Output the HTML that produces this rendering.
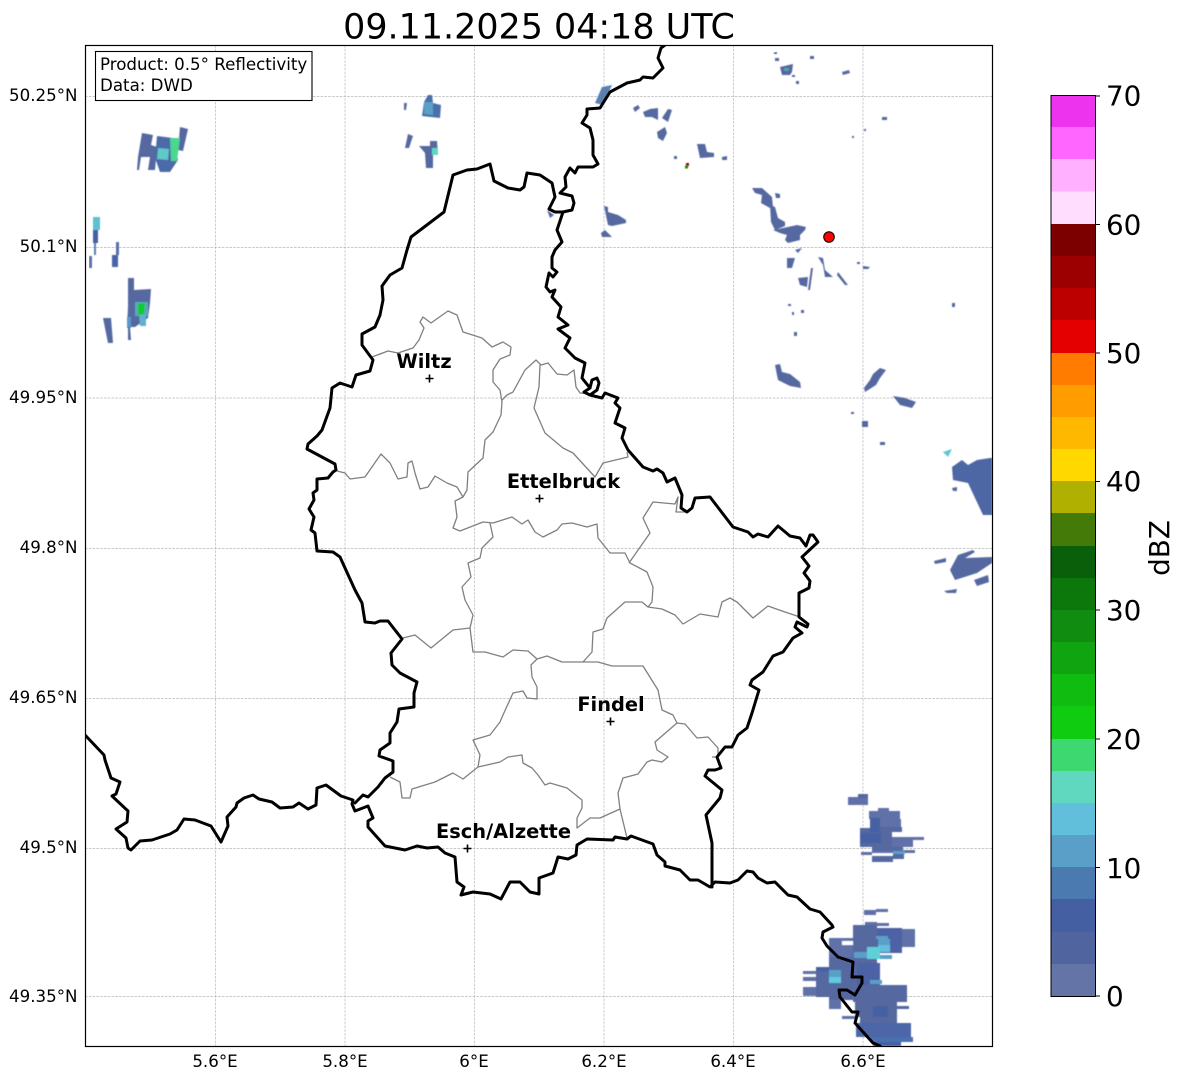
<!DOCTYPE html>
<html><head><meta charset="utf-8"><style>
html,body{margin:0;padding:0;background:#fff}
svg{display:block}
text{font-family:"DejaVu Sans","Liberation Sans",sans-serif;fill:#000}
.t{font-size:16.67px}
.c{font-size:27.8px}
.b{font-size:19.4px;font-weight:bold;text-anchor:middle}
.r{text-anchor:end}
.m{text-anchor:middle}
.k polyline{fill:none;stroke:#000;stroke-width:3;stroke-linejoin:round;stroke-linecap:round}
.g polyline{fill:none;stroke:#808080;stroke-width:1.3;stroke-linejoin:round}
</style></head><body>
<svg width="1184" height="1081" viewBox="0 0 1184 1081" xmlns="http://www.w3.org/2000/svg">
<rect width="1184" height="1081" fill="#fff"/>
<text x="539" y="38.500" font-size="34.9" class="m">09.11.2025 04:18 UTC</text>
<defs><clipPath id="p"><rect x="85" y="45" width="907" height="1001"/></clipPath>
<filter id="bl" x="0" y="0" width="1" height="1"><feGaussianBlur stdDeviation=".45"/></filter></defs>
<g clip-path="url(#p)">
<g stroke="#b8b8b8" stroke-width=".7" stroke-dasharray="2.6 1.2">
<path d="M215.500 45V1046M345 45V1046M474.500 45V1046M604 45V1046M733.500 45V1046M863 45V1046"/>
<path d="M85 96.500H992M85 247.500H992M85 398H992M85 548.500H992M85 698.500H992M85 848.500H992M85 996.500H992"/>
</g>
<g fill="#5468a0" filter="url(#bl)">
<polygon points="142,133 153,135 151,145 157,147 155,170 148,170 150,157 138,157 140,145"/>
<polygon points="138,157 141,157 139,170 137,170"/>
<polygon points="157,136 173,138 178,160 170,172 160,172 155,158" fill="#4e6aa8"/>
<polygon points="180,127 188,129 183,151 178,150"/>
<polygon points="158,148 169,149 168,160 157,159" fill="#5ec8c8"/>
<polygon points="170,138 180,138 177,161 171,161" fill="#48d890"/>
<rect x="93" y="217" width="7" height="13" fill="#5ec0d0"/>
<rect x="93" y="230" width="5" height="13" fill="#4a60a0"/>
<rect x="94" y="243" width="2" height="12" fill="#5a80b0"/>
<rect x="89" y="256" width="3" height="12" fill="#5a70a8"/>
<rect x="112" y="255" width="6" height="12" fill="#4a62a8"/>
<rect x="116" y="242" width="3" height="13" fill="#5a70a8"/>
<polygon points="128,278 134,278 134,290 151,289 150,303 148,318 135,327 127,327 128,307"/>
<rect x="135" y="302" width="13" height="14" fill="#5aa8b8"/>
<polygon points="138,303 145,303 144,314 138,315" fill="#10cc30"/>
<polygon points="139,315 146,315 146,326 140,326" fill="#62b0d0"/>
<polygon points="127,317 131,317 131,328 127,328" fill="#5a98c8"/>
<polygon points="128,327 130,327 131,340 128,340"/>
<polygon points="103,318 111,318 113,343 108,343"/>
<polygon points="404,103 407,103 406,110 404,110"/>
<polygon points="428,95 432,95 433,103 441,105 440,118 422,116 424,102" fill="#4a70a8"/>
<polygon points="424,102 433,102 433,115 424,114" fill="#5a9fc8"/>
<polygon points="408,134 413,136 409,148 405,148"/>
<polygon points="419,146 430,146 430,141 437,141 438,155 433,155 433,168 426,168 425,153"/>
<polygon points="432,148 438,148 438,155 432,155" fill="#60d8c0"/>
<polygon points="595,103 602,87 612,85 603,105" fill="#5a80b0"/>
<polygon points="633,108 638,105 640,108 635,112"/>
<polygon points="643,112 650,109 658,108 658,120 652,117 645,117"/>
<polygon points="662,118 668,109 672,110 668,122"/>
<polygon points="657,132 665,127 667,133 663,141 658,138"/>
<rect x="674" y="156" width="3" height="3"/>
<rect x="686" y="163" width="3" height="3" fill="#9c0000"/>
<rect x="685" y="165.500" width="3" height="3" fill="#108c10"/>
<polygon points="697,144 705,144 707,152 714,153 714,157 700,158"/>
<polygon points="722,157 727,156 727,160 722,160"/>
<polygon points="752,188 762,188 772,197 773,207 770,208 761,203 762,195 755,193"/>
<polygon points="770,205 775,207 778,218 785,222 785,226 775,230 771,222"/>
<polygon points="773,230 788,227 797,225 806,227 805,230 800,235 800,240 788,243 785,240 787,235 780,233"/>
<polygon points="775,193 780,194 780,198 776,198"/>
<polygon points="795,250 802,248 798,253"/>
<polygon points="787,258 795,258 792,268 787,268"/>
<polygon points="798,278 808,277 807,287 800,285"/>
<polygon points="811,268 813,268 810,290 808,290"/>
<polygon points="818,257 823,258 825,270 833,277 825,277 823,265"/>
<polygon points="838,272 848,285 845,285 837,275"/>
<polygon points="863,266 870,267 868,269 863,269"/>
<rect x="857" y="262" width="3" height="2"/>
<rect x="882" y="117" width="5" height="3"/>
<rect x="774" y="52" width="3" height="2"/>
<rect x="775" y="58" width="4" height="3"/>
<polygon points="780,67 793,64 792,72 790,75 782,75"/>
<rect x="784" y="68" width="5" height="3" fill="#5a9fa8"/>
<rect x="792" y="75" width="3" height="2"/>
<rect x="796" y="81" width="3" height="3"/>
<rect x="810" y="56" width="4" height="3"/>
<polygon points="842,72 849,70 850,73 843,75"/>
<rect x="852" y="136" width="2" height="2"/>
<rect x="864" y="129" width="2" height="2"/>
<rect x="952" y="303" width="3" height="4"/>
<rect x="788" y="304" width="3" height="2"/>
<rect x="792" y="312" width="2" height="3"/>
<rect x="801" y="310" width="3" height="3"/>
<rect x="794" y="332" width="3" height="4"/>
<polygon points="604,206 608,207 608,212 618,215 626,220 626,223 612,226 608,225"/>
<polygon points="601,233 605,230 612,237 602,237"/>
<polygon points="547,210 554,215 550,218"/>
<polygon points="775,365 780,364 782,372 790,374 800,382 801,388 790,386 778,380"/>
<polygon points="880,368 886,370 880,378 876,385 865,392 864,388 870,380 873,374"/>
<polygon points="893,396 905,398 916,402 912,408 900,405"/>
<rect x="851" y="412" width="3" height="2"/>
<rect x="862" y="421" width="6" height="6"/>
<rect x="880" y="442" width="5" height="3"/>
<polygon points="943,452 952,449 948,457" fill="#5ec8d0"/>
<polygon points="952,467 962,460 968,465 977,460 990,458 992,458 992,515 983,515 968,483 953,480" fill="#4e66a4"/>
<polygon points="952,488 957,487 957,491 953,491"/>
<polygon points="950,570 958,555 973,550 975,552 965,558 992,557 992,563 977,573 955,580"/>
<polygon points="934,561 946,558 946,562 935,564"/>
<polygon points="974,580 988,575 989,582 977,586"/>
<polygon points="944,591 957,589 956,593 947,593"/>
<rect x="848" y="797" width="20" height="8" fill="#6070a8"/>
<rect x="858" y="794" width="10" height="4"/>
<rect x="878" y="808" width="11" height="3" fill="#6070a8"/>
<rect x="869" y="811" width="31" height="8" fill="#6070a8"/>
<rect x="870" y="819" width="31" height="8" fill="#6070a8"/>
<rect x="870" y="827" width="32" height="5"/>
<rect x="860" y="828" width="32" height="19"/>
<rect x="870" y="818" width="10" height="14" fill="#4460a3"/>
<rect x="860" y="833" width="21" height="10" fill="#4460a3"/>
<rect x="892" y="837" width="21" height="10" fill="#6070a8"/>
<rect x="913" y="837" width="11" height="3" fill="#6070a8"/>
<rect x="861" y="852" width="11" height="3" fill="#6070a8"/>
<rect x="872" y="850" width="43" height="3" fill="#6070a8"/>
<rect x="893" y="851" width="12" height="3" fill="#5a9fc8"/>
<rect x="872" y="856" width="21" height="6"/>
<rect x="893" y="854" width="11" height="5"/>
<rect x="872" y="847" width="31" height="4"/>
<rect x="864" y="910" width="12" height="5" fill="#6070a8"/>
<rect x="876" y="909" width="12" height="3" fill="#6070a8"/>
<rect x="865" y="922" width="12" height="5" fill="#6070a8"/>
<rect x="877" y="923" width="12" height="3" fill="#6070a8"/>
<rect x="853" y="925" width="24" height="19"/>
<rect x="877" y="928" width="25" height="25" fill="#4e62a4"/>
<rect x="902" y="929" width="13" height="18" fill="#6070a8"/>
<rect x="829" y="938" width="24" height="7" fill="#6070a8"/>
<rect x="842" y="941" width="11" height="4" fill="#fff"/>
<rect x="829" y="945" width="26" height="12" fill="#6070a8"/>
<rect x="853" y="944" width="24" height="20" fill="#5468a0"/>
<rect x="816" y="967" width="37" height="30"/>
<rect x="803" y="971" width="13" height="3" fill="#6070a8"/>
<rect x="803" y="977" width="13" height="4" fill="#6070a8"/>
<rect x="803" y="987" width="13" height="9" fill="#6070a8"/>
<rect x="829" y="957" width="28" height="43"/>
<rect x="829" y="1000" width="12" height="9" fill="#6070a8"/>
<rect x="842" y="1016" width="15" height="3" fill="#6070a8"/>
<rect x="857" y="963" width="23" height="27" fill="#4e62a4"/>
<rect x="853" y="985" width="54" height="17" fill="#5468a0"/>
<rect x="897" y="1006" width="12" height="3"/>
<rect x="855" y="1000" width="42" height="17"/>
<rect x="873" y="1006" width="15" height="11" fill="#4460a3"/>
<rect x="860" y="1017" width="37" height="6"/>
<rect x="856" y="1023" width="55" height="14" fill="#4e66a8"/>
<rect x="870" y="1037" width="43" height="5" fill="#4a70b0"/>
<rect x="873" y="1042" width="28" height="4" fill="#4460a3"/>
<rect x="876" y="936" width="12" height="3" fill="#5a9fc8"/>
<rect x="878" y="939" width="12" height="7" fill="#5a9fc8"/>
<rect x="878" y="945" width="12" height="7" fill="#62bfdb"/>
<rect x="854" y="952" width="13" height="6" fill="#5a9fc8"/>
<rect x="867" y="947" width="13" height="12" fill="#60d0d8"/>
<rect x="880" y="955" width="12" height="4" fill="#5a9fc8"/>
<rect x="829" y="970" width="12" height="7" fill="#5a9fc8"/>
<rect x="829" y="977" width="12" height="6" fill="#62c8e0"/>
<rect x="816" y="967" width="13" height="4" fill="#4460a3"/>
<rect x="870" y="980" width="12" height="4" fill="#5a9fc8"/>
</g>
<g class="g">
<polyline points="372,357 388,351 398,353 413,348 419,340 424,328 420,322 423,317 431,323 448,311 457,315 463,332 482,338 492,347 503,342 511,347 510,355 500,359 493,370 493,382 500,390 502,402 501,415 493,432 485,440 483,458 468,472 467,490 463,497"/>
<polyline points="337,471 345,473 350,479 365,477 381,454 390,463 398,479 407,477 408,463 412,461 415,473 420,489 428,487 435,476 447,483 457,487 463,497 455,501 457,517 453,528 460,531 483,522 493,523 512,517 522,524 528,520 535,532 543,537 557,530 562,524 572,523 587,527 597,524 598,538 610,553 625,553 630,563 647,572 653,587 652,602 648,607"/>
<polyline points="502,400 507,395 513,392 525,370 536,360 541,365 548,363 557,374 567,375 574,370 576,387 580,393 590,394"/>
<polyline points="540,365 539,387 534,408 545,433 563,448 573,453 595,477 603,463 628,457 627,452"/>
<polyline points="490,523 493,537 482,548 480,558 468,563 471,577 462,587 465,600 473,615 470,628 453,630 431,648 415,635 403,638"/>
<polyline points="470,628 473,652 485,652 503,657 513,650 528,651 537,659 547,656 562,662 583,662 598,662 612,666 643,666 658,690 662,710 673,715 677,723 685,724 697,738 708,737 718,748 718,757 712,757"/>
<polyline points="537,659 531,665 532,677 537,687 537,699 527,698 523,691 513,693 503,715 500,722 490,735 473,740 480,755 478,767 463,779 453,773 443,778 435,782 412,789 410,798 402,798 400,782 390,777"/>
<polyline points="478,767 500,762 508,757 522,755 523,763 532,768 538,775 545,785 550,783 567,788 582,800 582,808 577,818 577,828 590,818 600,818 620,809 627,838"/>
<polyline points="620,809 618,793 623,778 638,774 647,762 652,760 662,762 668,757 657,750 655,742 677,723"/>
<polyline points="583,662 592,652 593,632 603,629 607,618 625,602 642,602 648,607 662,609 675,615 683,624 700,614 718,617 722,602 730,598 737,602 753,618 768,606 782,611 800,617"/>
<polyline points="629,563 650,533 643,518 653,502 675,504 678,497 676,512 687,512"/>
</g>
<g class="k">
<polyline points="85,735 104,755 105,760 111,778 120,782 116,794 112,796 128,811 127,822 116,829 126,838 128,848 131,850 140,841 152,840 170,834 177,830 184,819 195,820 211,826 221,842 228,826 227,817 236,807 237,803 244,798 253,795 259,799 272,802 280,808 293,807 299,803 308,809 316,805 317,788 326,785 341,796 353,800 352,804 355,811 368,806 373,818 368,821 368,827 385,846 405,850 417,846 427,848 438,847 445,853 455,857 457,882 464,887 461,895 473,892 490,894 501,899 510,882 520,882 530,892 539,894 539,878 553,873 558,857 568,859 576,855 577,845 587,839 613,840 615,837 627,839 631,836 653,844 657,855 665,862 665,866 680,870 690,880 698,880 710,887 715,882 730,883 738,880 747,871 753,872 758,878 767,883 775,882 788,895 797,897 810,909 820,912 832,925 833,927 823,932 822,938 827,946 838,957 853,962 852,977 862,977 862,983 855,995 847,990 839,990 840,997 852,1012 858,1012 855,1023 873,1043 880,1046"/>
<polyline points="355,803 363,795 368,797 378,787 385,778 393,772 393,761 379,756 380,750 390,743 390,733 397,722 399,709 414,707 414,693 417,682 400,673 392,665 391,653 402,639 388,621 380,621 375,623 365,622 362,603 355,590 340,557 333,552 317,551 315,533 311,530 314,517 309,509 314,500 313,493 317,490 317,479 328,478 333,472 336,470 335,464 307,449 308,444 317,436 322,430 330,408 332,388 340,383 352,387 356,375 370,371 373,360 362,345 362,334 375,327 380,315 383,300 382,286 390,275 402,268 407,250 411,237 444,212 453,175 467,170 477,169 490,164 494,181 508,188 520,190 524,187 527,173 540,175 552,183 555,197 549,209 555,212 563,212 572,210 574,203 572,196 560,193 566,187 565,177 570,168 575,173 578,167 593,167 598,164 593,155 593,140 590,128 582,123 587,115 587,109 600,108 610,92 627,83 640,80 643,77 653,78 663,68 658,58 661,48 665,45"/>
<polyline points="563,212 557,230 562,242 555,250 552,257 552,268 557,272 553,277 549,273 546,287 550,292 555,290 552,297 561,307 558,317 568,325 558,329 570,338 565,348 575,358 585,363 582,378 590,388 592,380 597,378 599,383 597,390 590,395 584,392 590,388"/>
<polyline points="590,395 602,398 605,393 618,398 615,403 620,408 615,423 625,428 622,438 628,450 643,467 653,471 657,469 663,473 667,482 675,478 682,495 681,508 687,512 692,508 695,498 710,497 733,527 748,532 753,537 758,534 768,537 778,526 790,536 800,538 806,546 810,535 813,535 818,542 802,557 809,566 804,573 810,581 809,588 799,593 799,617 808,624 807,627 797,622 795,627 802,633 793,638 783,652 773,656 763,672 752,680 750,685 759,690 752,713 747,728 738,735 732,747 725,747 717,757 721,768 715,770 708,770 705,776 722,790 720,798 706,815 712,843 712,887"/>
</g>
<g fill="none" stroke="#000" stroke-width="1.6">
<path d="M425.500 378.500h8M429.500 374.500v8M535.500 498.500h8M539.500 494.500v8M606.500 721.500h8M610.500 717.500v8M463.500 848.500h8M467.500 844.500v8"/>
</g>
<text class="b" x="424" y="368">Wiltz</text>
<text class="b" x="563.500" y="488">Ettelbruck</text>
<text class="b" x="611" y="711">Findel</text>
<text class="b" x="503.500" y="838">Esch/Alzette</text>
<circle cx="829" cy="237" r="5.300" fill="#f00" stroke="#000" stroke-width="1"/>
<rect x="95.500" y="51.500" width="216.500" height="49" fill="#fff" stroke="#000" stroke-width="1.1"/>
<text class="t" x="100" y="70">Product: 0.5° Reflectivity</text>
<text class="t" x="100" y="91">Data: DWD</text>
</g>
<rect x="85.500" y="45.500" width="907" height="1001" fill="none" stroke="#000" stroke-width="1.2"/>
<g class="t">
<text class="m t" x="215" y="1067">5.6°E</text>
<text class="m t" x="345" y="1067">5.8°E</text>
<text class="m t" x="474" y="1067">6°E</text>
<text class="m t" x="604" y="1067">6.2°E</text>
<text class="m t" x="733" y="1067">6.4°E</text>
<text class="m t" x="863" y="1067">6.6°E</text>
<text class="r t" x="77.500" y="101">50.25°N</text>
<text class="r t" x="77.500" y="252">50.1°N</text>
<text class="r t" x="77.500" y="403">49.95°N</text>
<text class="r t" x="77.500" y="553">49.8°N</text>
<text class="r t" x="77.500" y="703">49.65°N</text>
<text class="r t" x="77.500" y="853">49.5°N</text>
<text class="r t" x="77.500" y="1002">49.35°N</text>
</g>
<g>
<rect x="1051" y="96" width="44" height="32.200" fill="#ee33ee"/>
<rect x="1051" y="127" width="44" height="33" fill="#ff66ff"/>
<rect x="1051" y="159" width="44" height="33" fill="#ffb0ff"/>
<rect x="1051" y="191.500" width="44" height="33" fill="#ffddff"/>
<rect x="1051" y="224" width="44" height="33" fill="#7c0000"/>
<rect x="1051" y="256" width="44" height="33" fill="#9c0000"/>
<rect x="1051" y="288" width="44" height="33" fill="#bc0000"/>
<rect x="1051" y="320" width="44" height="33" fill="#e40000"/>
<rect x="1051" y="353" width="44" height="33" fill="#ff7c00"/>
<rect x="1051" y="385" width="44" height="33" fill="#ff9c00"/>
<rect x="1051" y="417" width="44" height="33" fill="#ffb800"/>
<rect x="1051" y="449" width="44" height="33" fill="#ffd800"/>
<rect x="1051" y="481" width="44" height="33" fill="#b0b000"/>
<rect x="1051" y="513" width="44" height="33" fill="#447a08"/>
<rect x="1051" y="546" width="44" height="33" fill="#0a600a"/>
<rect x="1051" y="578" width="44" height="33" fill="#0c780c"/>
<rect x="1051" y="610" width="44" height="33" fill="#108c10"/>
<rect x="1051" y="642" width="44" height="33" fill="#10a410"/>
<rect x="1051" y="674" width="44" height="33" fill="#10bc10"/>
<rect x="1051" y="706" width="44" height="33" fill="#10cc10"/>
<rect x="1051" y="739" width="44" height="33" fill="#3ed870"/>
<rect x="1051" y="771" width="44" height="33" fill="#60d8c0"/>
<rect x="1051" y="803" width="44" height="33" fill="#62bfdb"/>
<rect x="1051" y="835" width="44" height="33" fill="#5a9fc8"/>
<rect x="1051" y="867" width="44" height="33" fill="#4a7ab0"/>
<rect x="1051" y="899" width="44" height="33" fill="#4460a3"/>
<rect x="1051" y="932" width="44" height="32" fill="#5064a0"/>
<rect x="1051" y="964" width="44" height="32.500" fill="#6474a6"/>
<rect x="1051" y="95.500" width="44.500" height="901" fill="none" stroke="#000" stroke-width="1"/>
<path d="M1095 96h5M1095 224.500h5M1095 353h5M1095 481.500h5M1095 610h5M1095 739h5M1095 867.500h5M1095 996h5" stroke="#000" stroke-width="1"/>
<text class="c" x="1106" y="105.500">70</text>
<text class="c" x="1106" y="234.500">60</text>
<text class="c" x="1106" y="363">50</text>
<text class="c" x="1106" y="491">40</text>
<text class="c" x="1106" y="620">30</text>
<text class="c" x="1106" y="749">20</text>
<text class="c" x="1106" y="878">10</text>
<text class="c" x="1106" y="1006">0</text>
<text class="c m" transform="translate(1169 548) rotate(-90)">dBZ</text>
</g>
</svg>
</body></html>
